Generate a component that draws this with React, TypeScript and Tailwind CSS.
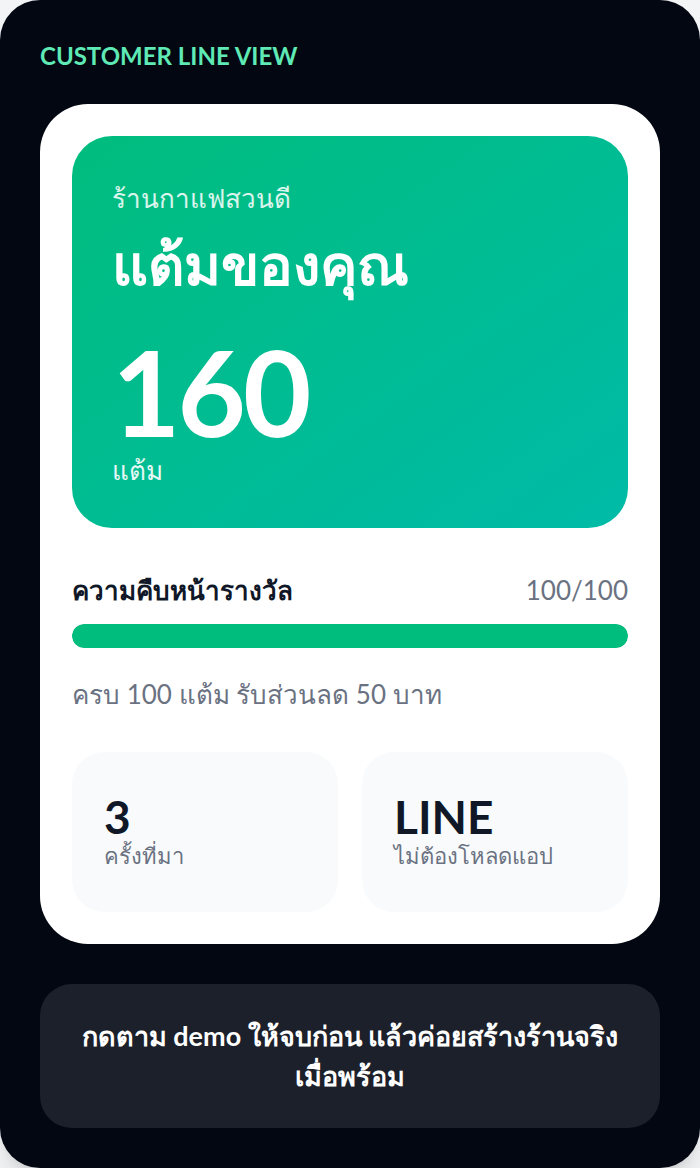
import React from "react";

/* -------------------------------------------------------------------------- */
/*                           CUSTOMER LINE VIEW CARD                          */
/* -------------------------------------------------------------------------- */

const STATS = [
  { value: "3", label: "ครั้งที่มา" },
  { value: "LINE", label: "ไม่ต้องโหลดแอป" },
];

export default function App() {
  const points = 100;
  const goal = 100;
  const pct = Math.min(100, (points / goal) * 100);

  return (
    <div
      className="min-h-screen bg-gray-100"
      style={{ fontFamily: "Lato, 'Noto Sans', sans-serif" }}
    >
      <div className="rounded-[40px] bg-gray-950 p-10 shadow-xl">
        {/* Header */}
        <div className="mb-8 text-2xl leading-8 font-bold text-emerald-300">
          CUSTOMER LINE VIEW
        </div>

        {/* Phone card */}
        <div className="rounded-[48px] bg-white p-8">
          {/* Points hero */}
          <div className="flex h-[392px] flex-col rounded-[40px] bg-gradient-to-br from-emerald-500 to-teal-500 px-10 pt-11 pb-10 text-white">
            <div className="text-[26px] leading-9 text-white/85">ร้านกาแฟสวนดี</div>
            <div className="mt-4 text-[56px] leading-[64px] font-bold">แต้มของคุณ</div>
            <div className="mt-auto text-[118px] leading-[100px] font-bold tracking-tight">
              160
            </div>
            <div className="mt-[10px] text-[26px] leading-9 text-white/90">แต้ม</div>
          </div>

          {/* Progress */}
          <div className="mt-11 flex items-center justify-between">
            <span className="text-[26px] leading-9 font-bold text-gray-900">
              ความคืบหน้ารางวัล
            </span>
            <span className="text-[26px] leading-9 text-gray-500">
              {points}/{goal}
            </span>
          </div>
          <div className="mt-4 h-6 overflow-hidden rounded-full bg-gray-100">
            <div
              className="h-full rounded-full bg-emerald-500"
              style={{ width: `${pct}%` }}
            />
          </div>
          <div className="mt-7 text-[26px] leading-9 text-gray-500">
            ครบ 100 แต้ม รับส่วนลด 50 บาท
          </div>

          {/* Stats */}
          <div className="mt-10 grid grid-cols-2 gap-6">
            {STATS.map((s) => (
              <div
                key={s.value}
                className="flex h-40 flex-col justify-center rounded-[32px] bg-gray-50 px-8"
              >
                <div className="text-[46px] leading-[48px] font-bold text-gray-900">
                  {s.value}
                </div>
                <div className="text-[22px] leading-[30px] text-gray-500">{s.label}</div>
              </div>
            ))}
          </div>
        </div>

        {/* Footer hint */}
        <div className="mt-10 rounded-[32px] bg-white/10 px-8 py-8 text-center text-[27px] leading-10 font-bold text-white">
          กดตาม demo ให้จบก่อน แล้วค่อยสร้างร้านจริงเมื่อพร้อม
        </div>
      </div>
    </div>
  );
}
